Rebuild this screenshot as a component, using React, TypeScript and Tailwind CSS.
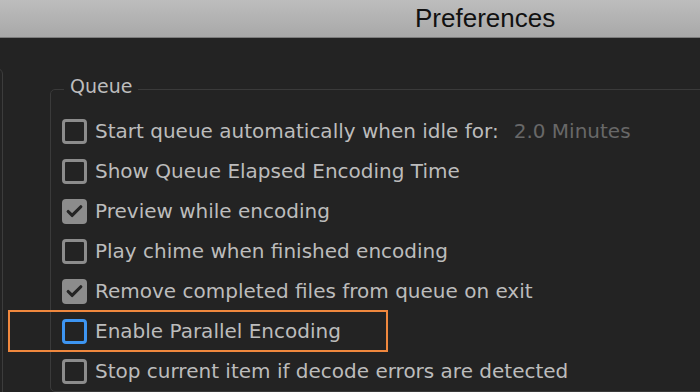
import { Check } from "lucide-react";

type Row = {
  label: string;
  checked?: boolean;
  focused?: boolean;
  extra?: string;
};

const rows: Row[] = [
  { label: "Start queue automatically when idle for:", extra: "2.0 Minutes" },
  { label: "Show Queue Elapsed Encoding Time" },
  { label: "Preview while encoding", checked: true },
  { label: "Play chime when finished encoding" },
  { label: "Remove completed files from queue on exit", checked: true },
  { label: "Enable Parallel Encoding", focused: true },
  { label: "Stop current item if decode errors are detected" },
];

function Box({ checked, focused }: { checked?: boolean; focused?: boolean }) {
  if (checked) {
    return (
      <div className="w-[25px] h-[25px] shrink-0 rounded-[4px] bg-[#8c8c8c] flex items-center justify-center">
        <Check size={19} strokeWidth={4} className="text-[#242424]" />
      </div>
    );
  }
  return (
    <div
      className={
        focused
          ? "w-[25px] h-[25px] shrink-0 rounded-[4px] border-[3px] border-[#3d95f2]"
          : "w-[25px] h-[25px] shrink-0 rounded-[4px] border-[3px] border-[#8c8c8c]"
      }
    />
  );
}

export default function App() {
  return (
    <div
      className="w-[700px] h-[392px] overflow-hidden bg-[#232323] flex flex-col"
      style={{ fontFamily: "'DejaVu Sans', Lato, sans-serif" }}
    >
      {/* title bar */}
      <div className="h-[38px] shrink-0 bg-gradient-to-b from-[#bdbdbd] to-[#a8a8a8] border-b border-[#7c7c7c] pl-[415px]">
        <span
          className="text-[26px] leading-[37px] text-[#111]"
          style={{ fontFamily: "'Liberation Sans', Arial, sans-serif" }}
        >
          Preferences
        </span>
      </div>

      <div className="flex flex-1 min-h-0">
        {/* left list panel edge */}
        <div className="-ml-[20px] w-[23px] mt-[30px] mb-[-20px] shrink-0 rounded-md border border-[#3c3c3c]" />

        <fieldset className="ml-[47px] mt-[39px] w-[720px] shrink-0 rounded-[5px] border border-[#3a3a3a] px-[11px] pt-[10px]">
          <legend className="ml-[2px] px-[6px] text-[19px] leading-[24px] text-[#bdbdbd]">
            <span className="relative -top-[3px]">Queue</span>
          </legend>

          <div className="flex flex-col">
            {rows.map((r) => (
              <div key={r.label} className="relative h-[40px] flex items-center gap-[8px]">
                {r.focused && (
                  <div className="absolute left-[-54px] top-[-1px] w-[380px] h-[42px] border-2 border-[#f0883e]" />
                )}
                <Box checked={r.checked} focused={r.focused} />
                <span className="text-[20px] text-[#bcbcbc] whitespace-nowrap">{r.label}</span>
                {r.extra && (
                  <span className="ml-[7px] text-[20px] text-[#686868] whitespace-nowrap">{r.extra}</span>
                )}
              </div>
            ))}
          </div>
        </fieldset>
      </div>
    </div>
  );
}
